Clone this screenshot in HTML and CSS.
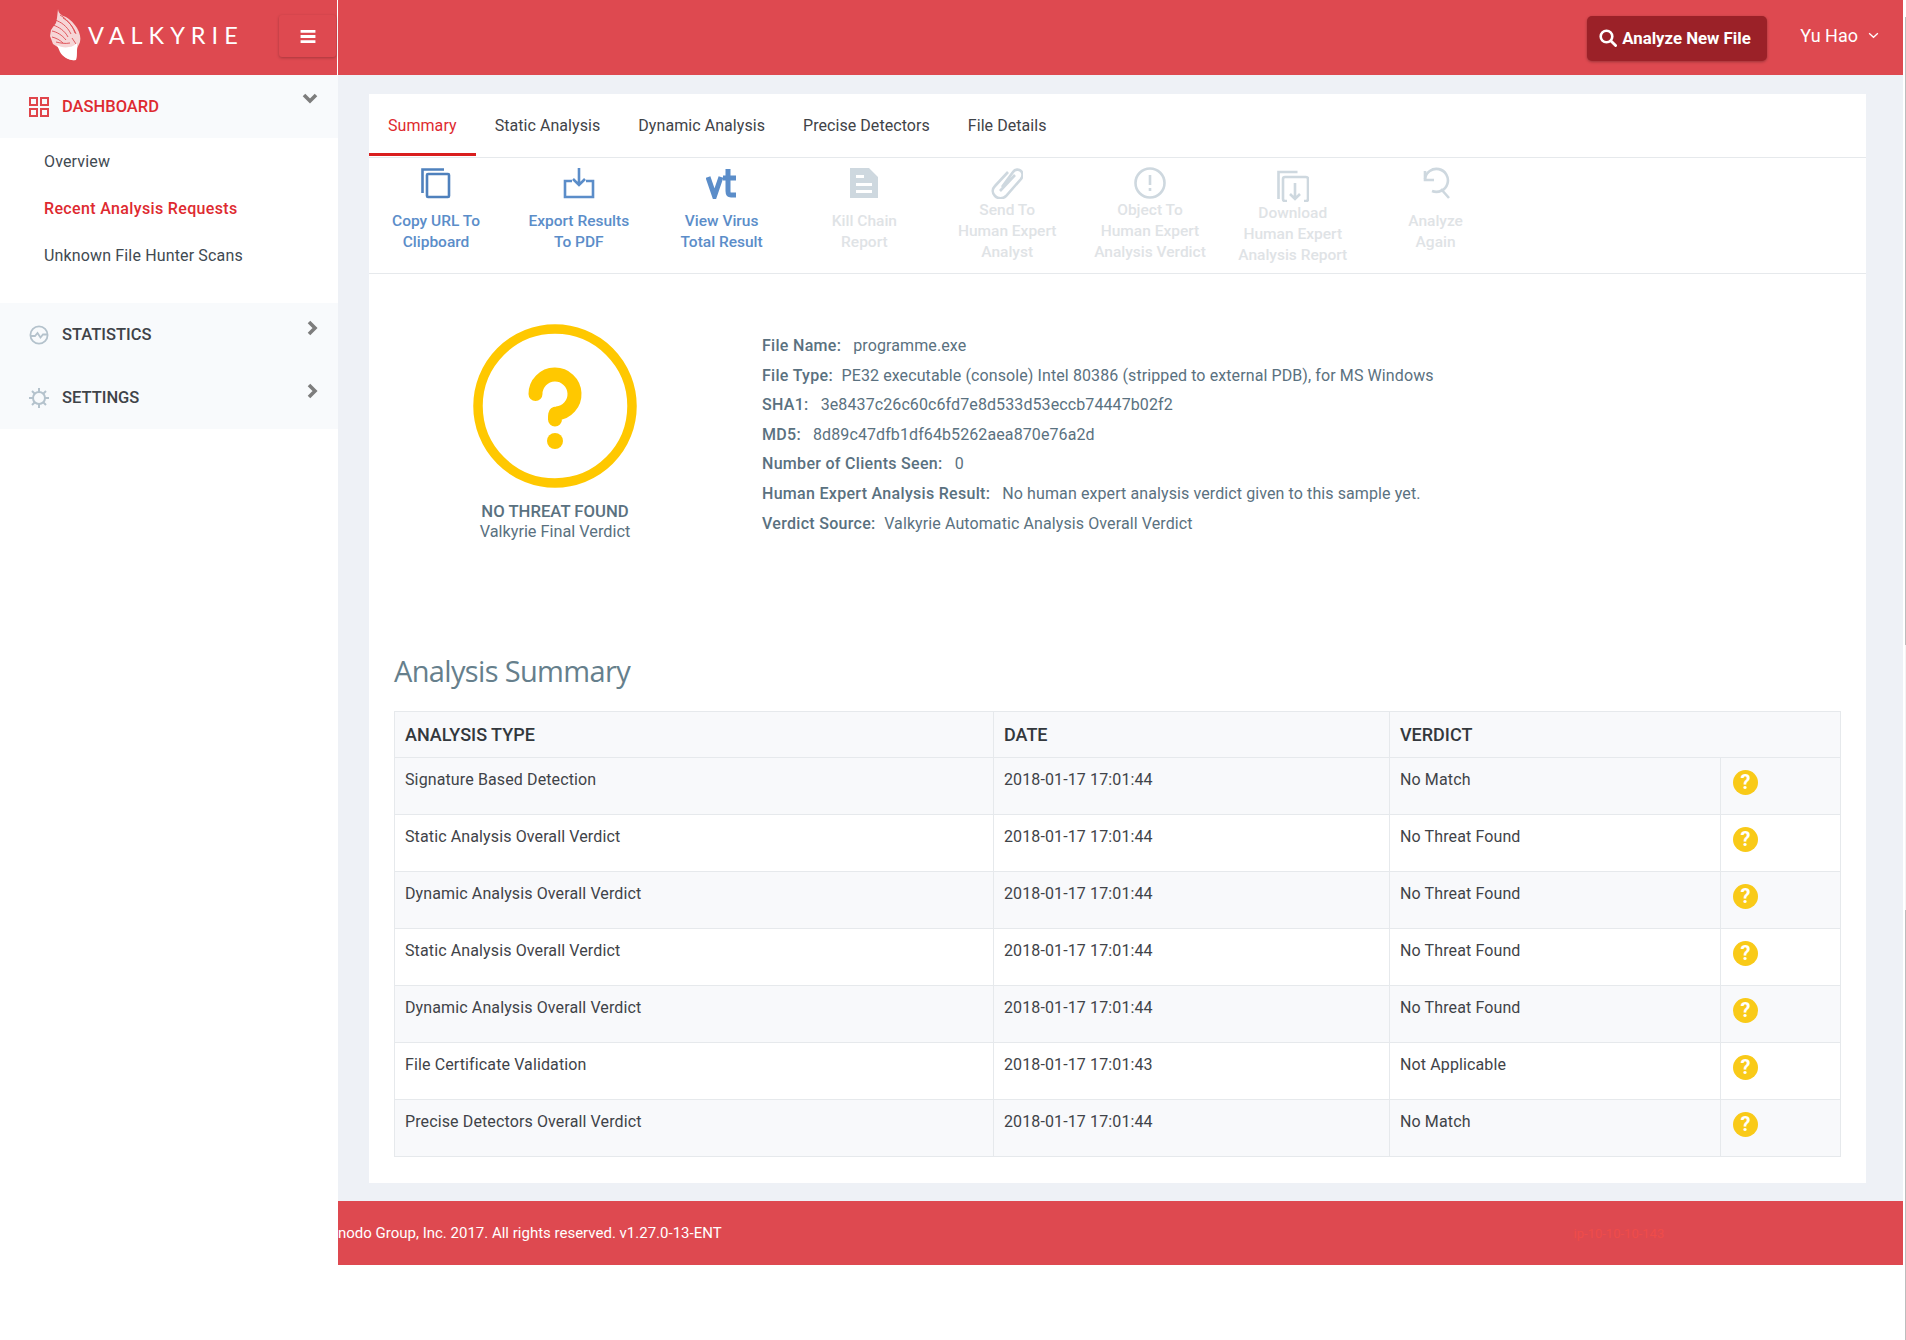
FILE: index.html
```html
<!DOCTYPE html>
<html lang="en">
<head>
  <meta charset="UTF-8" />
  <meta name="viewport" content="width=device-width, initial-scale=1.0"/>
  <title>Valkyrie - Analysis Result</title>
  <link rel="stylesheet" href="styles.css">
</head>
<body>
  <div class="scroll-edge"></div>
  <div class="page">
    <header class="topbar">
      <div class="brand">
        <a class="logo" href="#">
          <svg class="logo-wing" viewBox="0 0 32 52" width="32" height="52">
            <path d="M8 0c0 3 2 5 5 7 5 1 10 6 14 12 3 5 4 10 3 14-1 3-3 5-3 8 0 4 0 7-1 10-4 1-8-1-11-3-3-3-5-6-6-9l-6-4-3-8 1-6 2-3 3-4 1-5z" fill="#f6d5d6"/>
            <path d="M7 36c3 2 8 3 12 2 3 0 6-2 8-4 0 6 0 12-1 17-7 1-13-3-16-8z" fill="#fff"/>
            <path d="M5 11c6 2 12 6 16 14M3 16c6 2 12 6 15 12M10 6c5 3 12 9 15 18M2 22c5 1 10 4 14 9M2 28c4 1 8 3 11 6M13 9c5 3 10 8 13 16M6 33c4 1 9 2 14 1M22 29l4 6" stroke="#de4950" stroke-width="0.900" fill="none"/>
          </svg>
          <span class="logo-text">VALKYRIE</span>
        </a>
        <button class="menu-btn" aria-label="Menu">
          <svg viewBox="0 0 16 14" width="16" height="13"><path d="M0 0h16v3H0zM0 5.500h16v3H0zM0 11h16v3H0z" fill="#fff"/></svg>
        </button>
      </div>
      <div class="topbar-right">
        <button class="analyze-btn">
          <svg viewBox="0 0 18 18" width="18" height="18"><circle cx="7.500" cy="7.500" r="5.800" fill="none" stroke="#fff" stroke-width="2.600"/><path d="M12 12l4.600 4.600" stroke="#fff" stroke-width="2.800" stroke-linecap="round"/></svg>
          Analyze New File
        </button>
        <div class="user">Yu Hao
          <svg viewBox="0 0 12 8" width="11" height="7"><path d="M1 1.500l5 4.500 5-4.500" fill="none" stroke="#fff" stroke-width="1.500"/></svg>
        </div>
      </div>
    </header>

    <div class="body-row">
      <aside class="sidebar">
        <div class="side-head active">
          <svg class="side-icon" viewBox="0 0 20 20" width="20" height="20" fill="none" stroke="#e0454b" stroke-width="2"><rect x="1" y="1" width="7" height="7"/><rect x="12" y="1" width="7" height="7"/><rect x="1" y="12" width="7" height="7"/><rect x="12" y="12" width="7" height="7"/></svg>
          <span>DASHBOARD</span>
          <svg class="chev chev-down" viewBox="0 0 16 11" width="16" height="11"><path d="M2 2l6 6 6-6" fill="none" stroke="#7d7d7d" stroke-width="3.600"/></svg>
        </div>
        <ul class="side-links">
          <li>Overview</li>
          <li class="current">Recent Analysis Requests</li>
          <li>Unknown File Hunter Scans</li>
        </ul>
        <div class="side-head">
          <svg class="side-icon" viewBox="0 0 20 20" width="20" height="20" fill="none" stroke="#b4c2cc" stroke-width="1.800"><circle cx="10" cy="10" r="8.600"/><path d="M2 11h4l2.500-3 3 4.500 2.500-3h4"/></svg>
          <span>STATISTICS</span>
          <svg class="chev chev-right" viewBox="0 0 11 16" width="11" height="16"><path d="M2 2l6 6-6 6" fill="none" stroke="#7d7d7d" stroke-width="3.600"/></svg>
        </div>
        <div class="side-head">
          <svg class="side-icon" viewBox="0 0 20 20" width="20" height="20" fill="none" stroke="#b4c2cc"><circle cx="10" cy="10" r="6" stroke-width="2"/><path d="M10 0v4M10 16v4M0 10h4M16 10h4M3 3l2.500 2.500M14.500 14.500L17 17M17 3l-2.500 2.500M5.500 14.500L3 17" stroke-width="2"/></svg>
          <span>SETTINGS</span>
          <svg class="chev chev-right" viewBox="0 0 11 16" width="11" height="16"><path d="M2 2l6 6-6 6" fill="none" stroke="#7d7d7d" stroke-width="3.600"/></svg>
        </div>
      </aside>

      <div class="main-col">
        <main class="main">
          <section class="card">
            <nav class="tabs">
              <a class="tab active" href="#">Summary</a>
              <a class="tab" href="#">Static Analysis</a>
              <a class="tab" href="#">Dynamic Analysis</a>
              <a class="tab" href="#">Precise Detectors</a>
              <a class="tab" href="#">File Details</a>
            </nav>

            <div class="actions">
              <a class="action">
                <svg viewBox="0 0 32 32" width="32" height="32" fill="none" stroke="#4f81bd" stroke-width="2.600"><path d="M2.500 26V2.500H24"/><rect x="7" y="7" width="22" height="23" rx="1"/></svg>
                <span>Copy URL To<br>Clipboard</span>
              </a>
              <a class="action">
                <svg viewBox="0 0 32 32" width="32" height="32" fill="none" stroke="#5b8dc9" stroke-width="2.600"><path d="M16 1v17M10 12l6 6 6-6M9 14H2v16h28V14h-7"/></svg>
                <span>Export Results<br>To PDF</span>
              </a>
              <a class="action">
                <svg viewBox="0 0 32 32" width="32" height="32" fill="none" stroke="#5b8dc9" stroke-width="5"><path d="M2 10l6.500 19L15 10M22 2v22c0 3 1 4 3 4h5M17 11h13"/></svg>
                <span>View Virus<br>Total Result</span>
              </a>
              <a class="action off">
                <svg viewBox="0 0 32 32" width="32" height="32"><path fill-rule="evenodd" d="M2 1h19l9 9v21H2zM8 8v3h8V8zM8 16v3h16v-3zM8 23v3h16v-3z" fill="#ced8df"/></svg>
                <span>Kill Chain<br>Report</span>
              </a>
              <a class="action off three">
                <svg viewBox="0 0 32 32" width="32" height="32" fill="none" stroke="#ced8df" stroke-width="2.600"><path d="M11 20L22 5c2-3 6-3 8-1 2 2 2 5 0 8L15 29c-3 3-8 3-11 0-3-3-3-7 0-10L17 5M9 24L24 8"/></svg>
                <span>Send To<br>Human Expert<br>Analyst</span>
              </a>
              <a class="action off three">
                <svg viewBox="0 0 32 32" width="32" height="32" fill="none" stroke="#ced8df" stroke-width="2.600"><circle cx="16" cy="16" r="14.500"/><path d="M16 8v10M16 21v3"/></svg>
                <span>Object To<br>Human Expert<br>Analysis Verdict</span>
              </a>
              <a class="action off three low">
                <svg viewBox="0 0 32 32" width="32" height="32" fill="none" stroke="#ced8df" stroke-width="2.600"><path d="M1.500 29V2h19"/><path d="M10 31H8a2 2 0 0 1-2-2V9a2 2 0 0 1 2-2h21a2 2 0 0 1 2 2v20a2 2 0 0 1-2 2h-2"/><path d="M18 13v16M13 24l5 5 5-5"/></svg>
                <span>Download<br>Human Expert<br>Analysis Report</span>
              </a>
              <a class="action off">
                <svg viewBox="0 0 32 32" width="32" height="32" fill="none" stroke="#ced8df" stroke-width="2.600"><path d="M5 4v9h9"/><path d="M5 12A11.500 11.500 0 1 1 12 24M21 22l8 9"/></svg>
                <span>Analyze<br>Again</span>
              </a>
            </div>

            <div class="overview">
              <div class="verdict">
                <svg viewBox="0 0 164 164" width="164" height="164">
                  <circle cx="82" cy="82" r="77" fill="none" stroke="#ffc800" stroke-width="9.500"/>
                  <path d="M62.500 70a19.500 19.500 0 1 1 21 19.500c-1.500 0-1.500 1-1.500 6" fill="none" stroke="#ffc800" stroke-width="14" stroke-linecap="round" stroke-linejoin="round"/>
                  <circle cx="82" cy="117" r="8" fill="#ffc800"/>
                </svg>
                <div class="verdict-title">NO THREAT FOUND</div>
                <div class="verdict-sub">Valkyrie Final Verdict</div>
              </div>
              <div class="info">
                <p><b>File Name:</b> programme.exe</p>
                <p><b class="tight">File Type:</b> PE32 executable (console) Intel 80386 (stripped to external PDB), for MS Windows</p>
                <p><b>SHA1:</b> 3e8437c26c60c6fd7e8d533d53eccb74447b02f2</p>
                <p><b>MD5:</b> 8d89c47dfb1df64b5262aea870e76a2d</p>
                <p><b>Number of Clients Seen:</b> 0</p>
                <p><b>Human Expert Analysis Result:</b> No human expert analysis verdict given to this sample yet.</p>
                <p><b class="tight">Verdict Source:</b> Valkyrie Automatic Analysis Overall Verdict</p>
              </div>
            </div>

            <div class="summary">
              <h2>Analysis Summary</h2>
              <table class="summary-table">
                <colgroup>
                  <col class="col-type"><col class="col-date"><col class="col-verdict"><col>
                </colgroup>
                <thead>
                  <tr><th>ANALYSIS TYPE</th><th>DATE</th><th colspan="2">VERDICT</th></tr>
                </thead>
                <tbody>
                  <tr><td>Signature Based Detection</td><td>2018-01-17 17:01:44</td><td>No Match</td><td><span class="q">?</span></td></tr>
                  <tr><td>Static Analysis Overall Verdict</td><td>2018-01-17 17:01:44</td><td>No Threat Found</td><td><span class="q">?</span></td></tr>
                  <tr><td>Dynamic Analysis Overall Verdict</td><td>2018-01-17 17:01:44</td><td>No Threat Found</td><td><span class="q">?</span></td></tr>
                  <tr><td>Static Analysis Overall Verdict</td><td>2018-01-17 17:01:44</td><td>No Threat Found</td><td><span class="q">?</span></td></tr>
                  <tr><td>Dynamic Analysis Overall Verdict</td><td>2018-01-17 17:01:44</td><td>No Threat Found</td><td><span class="q">?</span></td></tr>
                  <tr><td>File Certificate Validation</td><td>2018-01-17 17:01:43</td><td>Not Applicable</td><td><span class="q">?</span></td></tr>
                  <tr><td>Precise Detectors Overall Verdict</td><td>2018-01-17 17:01:44</td><td>No Match</td><td><span class="q">?</span></td></tr>
                </tbody>
              </table>
            </div>
          </section>
        </main>
        <footer class="footer">
          <span>nodo Group, Inc. 2017. All rights reserved. v1.27.0-13-ENT</span>
          <span class="host">ip-10-10-10-143</span>
        </footer>
      </div>
    </div>
  </div>
</body>
</html>
```

FILE: styles.css
```css
* {
  box-sizing: border-box;
}

body {
  margin: 0;
  background: #fff;
  font-family: Roboto, sans-serif;
  font-size: 16px;
  color: #3f3f46;
  min-height: 1340px;
  position: relative;
}

.page {
  width: 1903px;
}

a {
  text-decoration: none;
}

/* browser scrollbar sliver on the right edge */
.scroll-edge {
  position: absolute;
  top: 0;
  right: 0;
  width: 1px;
  height: 1340px;
  background: linear-gradient(#fff 17px, #bdbdbd 17px, #bdbdbd 645px, #f5f3f3 645px, #f5f3f3 910px, #bdbdbd 910px);
}

/* top bar */
.topbar {
  height: 75px;
  background: #de4950;
  display: flex;
  justify-content: space-between;
}

.brand {
  width: 338px;
  border-right: 1px solid #fff;
  display: flex;
  align-items: flex-start;
  padding-left: 50px;
}

.logo {
  display: flex;
  align-items: center;
  height: 52px;
  margin-top: 9px;
  width: 229px;
}

.logo-text {
  color: #fff;
  font-family: Lato, sans-serif;
  font-weight: 400;
  font-size: 23.500px;
  letter-spacing: 6px;
  margin-left: 6px;
}

.menu-btn {
  width: 57px;
  height: 42px;
  margin-top: 15px;
  border: none;
  border-radius: 3px;
  background: #de4950;
  box-shadow: 0 1px 3px rgba(0, 0, 0, 0.25);
  display: flex;
  align-items: center;
  justify-content: center;
}

.topbar-right {
  display: flex;
  align-items: flex-start;
  padding-right: 24px;
}

.analyze-btn {
  width: 180px;
  height: 45px;
  margin-top: 16px;
  background: #9b2128;
  color: #fff;
  border: none;
  border-radius: 5px;
  box-shadow: 0 1px 3px rgba(0, 0, 0, 0.3);
  font-family: Roboto, sans-serif;
  font-weight: 700;
  font-size: 16.800px;
  display: flex;
  align-items: center;
  gap: 5px;
  padding: 0 0 2px 12px;
}

.user {
  margin: 25px 0 0 33px;
  color: #fff;
  font-size: 18px;
  display: flex;
  align-items: center;
  gap: 10px;
}

/* sidebar */
.body-row {
  display: flex;
}

.sidebar {
  width: 338px;
  flex: none;
}

.side-head {
  height: 63px;
  background: #f8fafc;
  display: flex;
  align-items: center;
  padding-left: 29px;
  font-weight: 500;
  font-size: 16.500px;
  color: #3f4348;
  position: relative;
}

.side-head span {
  margin-left: 13px;
}

.side-head.active {
  color: #de2a30;
}

.chev {
  position: absolute;
}

.chev-down {
  right: 20px;
  top: 18px;
}

.chev-right {
  right: 20px;
  top: 17px;
}

.side-links {
  list-style: none;
  margin: 0;
  padding: 0 0 24px 44px;
}

.side-links li {
  height: 47px;
  line-height: 47px;
  font-size: 16px;
  letter-spacing: 0.15px;
  color: #3f4a52;
}

.side-links li.current {
  color: #de2a30;
  font-weight: 500;
  letter-spacing: 0.35px;
}

/* main */
.main-col {
  flex: 1;
}

.main {
  background: #eef1f6;
  padding: 19px 37px 18px 31px;
}

.card {
  background: #fff;
  height: 1089px;
}

.tabs {
  display: flex;
  height: 64px;
  border-bottom: 1px solid #e6e9ec;
}

.tab {
  padding: 0 19px;
  line-height: 64px;
  height: 62px;
  font-size: 16px;
  letter-spacing: 0.06px;
  color: #3f4348;
}

.tab.active {
  color: #de2a30;
  border-bottom: 3px solid #d91e1e;
}

.actions {
  display: grid;
  grid-template-columns: repeat(8, 132px);
  column-gap: 10.800px;
  height: 116px;
  padding-left: 1px;
  border-bottom: 1px solid #e6e9ec;
}

.action {
  display: flex;
  flex-direction: column;
  align-items: center;
  text-align: center;
  font-size: 15.500px;
  font-weight: 500;
  line-height: 21px;
  color: #5b8dc9;
  padding-top: 9px;
}

.action span {
  margin-top: 12px;
}

.action.off {
  color: #dfe3e6;
}

.action.three span {
  margin-top: 1px;
}

.action.low {
  padding-top: 12px;
}

/* verdict + file info */
.overview {
  display: flex;
  height: 377px;
}

.verdict {
  width: 372px;
  padding-top: 50px;
  display: flex;
  flex-direction: column;
  align-items: center;
  color: #5a7180;
  font-size: 16.300px;
}

.verdict-title {
  font-weight: 500;
  font-size: 16.700px;
  margin-top: 14px;
}

.verdict-sub {
  margin-top: 1px;
}

.info {
  margin-left: 21px;
  padding-top: 57px;
  color: #5a7180;
  font-size: 16px;
  letter-spacing: 0.1px;
}

.info p {
  margin: 0;
  height: 29.600px;
  line-height: 29.600px;
}

.info b {
  font-weight: 500;
  letter-spacing: 0.3px;
  margin-right: 8px;
}

.info b.tight {
  margin-right: 4.500px;
}

/* summary table */
.summary {
  padding: 0 25px;
}

.summary h2 {
  margin: 0;
  height: 60px;
  font-family: "Open Sans", sans-serif;
  font-weight: 400;
  font-size: 29px;
  letter-spacing: -0.65px;
  line-height: 40px;
  color: #667f8c;
}

.summary-table {
  width: 100%;
  border-collapse: collapse;
  table-layout: fixed;
  font-size: 16px;
  letter-spacing: 0.12px;
}

.summary-table th,
.summary-table td {
  border: 1px solid #e6e9ec;
  text-align: left;
  padding: 0 10px;
  vertical-align: top;
  color: #3f4348;
}

.summary-table th {
  height: 46px;
  line-height: 45px;
  font-size: 18px;
  letter-spacing: 0;
  font-weight: 500;
  background: #f8f9fb;
  color: #33383d;
}

.summary-table td {
  height: 57px;
  line-height: 20px;
  padding-top: 12px;
}

.summary-table tbody tr:nth-child(odd) td {
  background: #f8f9fb;
}

.col-type {
  width: 599px;
}

.col-date {
  width: 396px;
}

.col-verdict {
  width: 331px;
}

.q {
  display: block;
  width: 25px;
  height: 25px;
  margin: 0 0 0 2px;
  border-radius: 50%;
  background: #f9ca18;
  color: #fff;
  text-align: center;
  font-weight: 700;
  font-size: 20px;
  line-height: 25px;
}

/* footer */
.footer {
  background: #de4950;
  height: 64px;
  display: flex;
  align-items: center;
  color: #fff;
  font-size: 15px;
}

.host {
  margin-left: 852px;
  font-size: 13px;
  color: #ef4c4a;
}
```
